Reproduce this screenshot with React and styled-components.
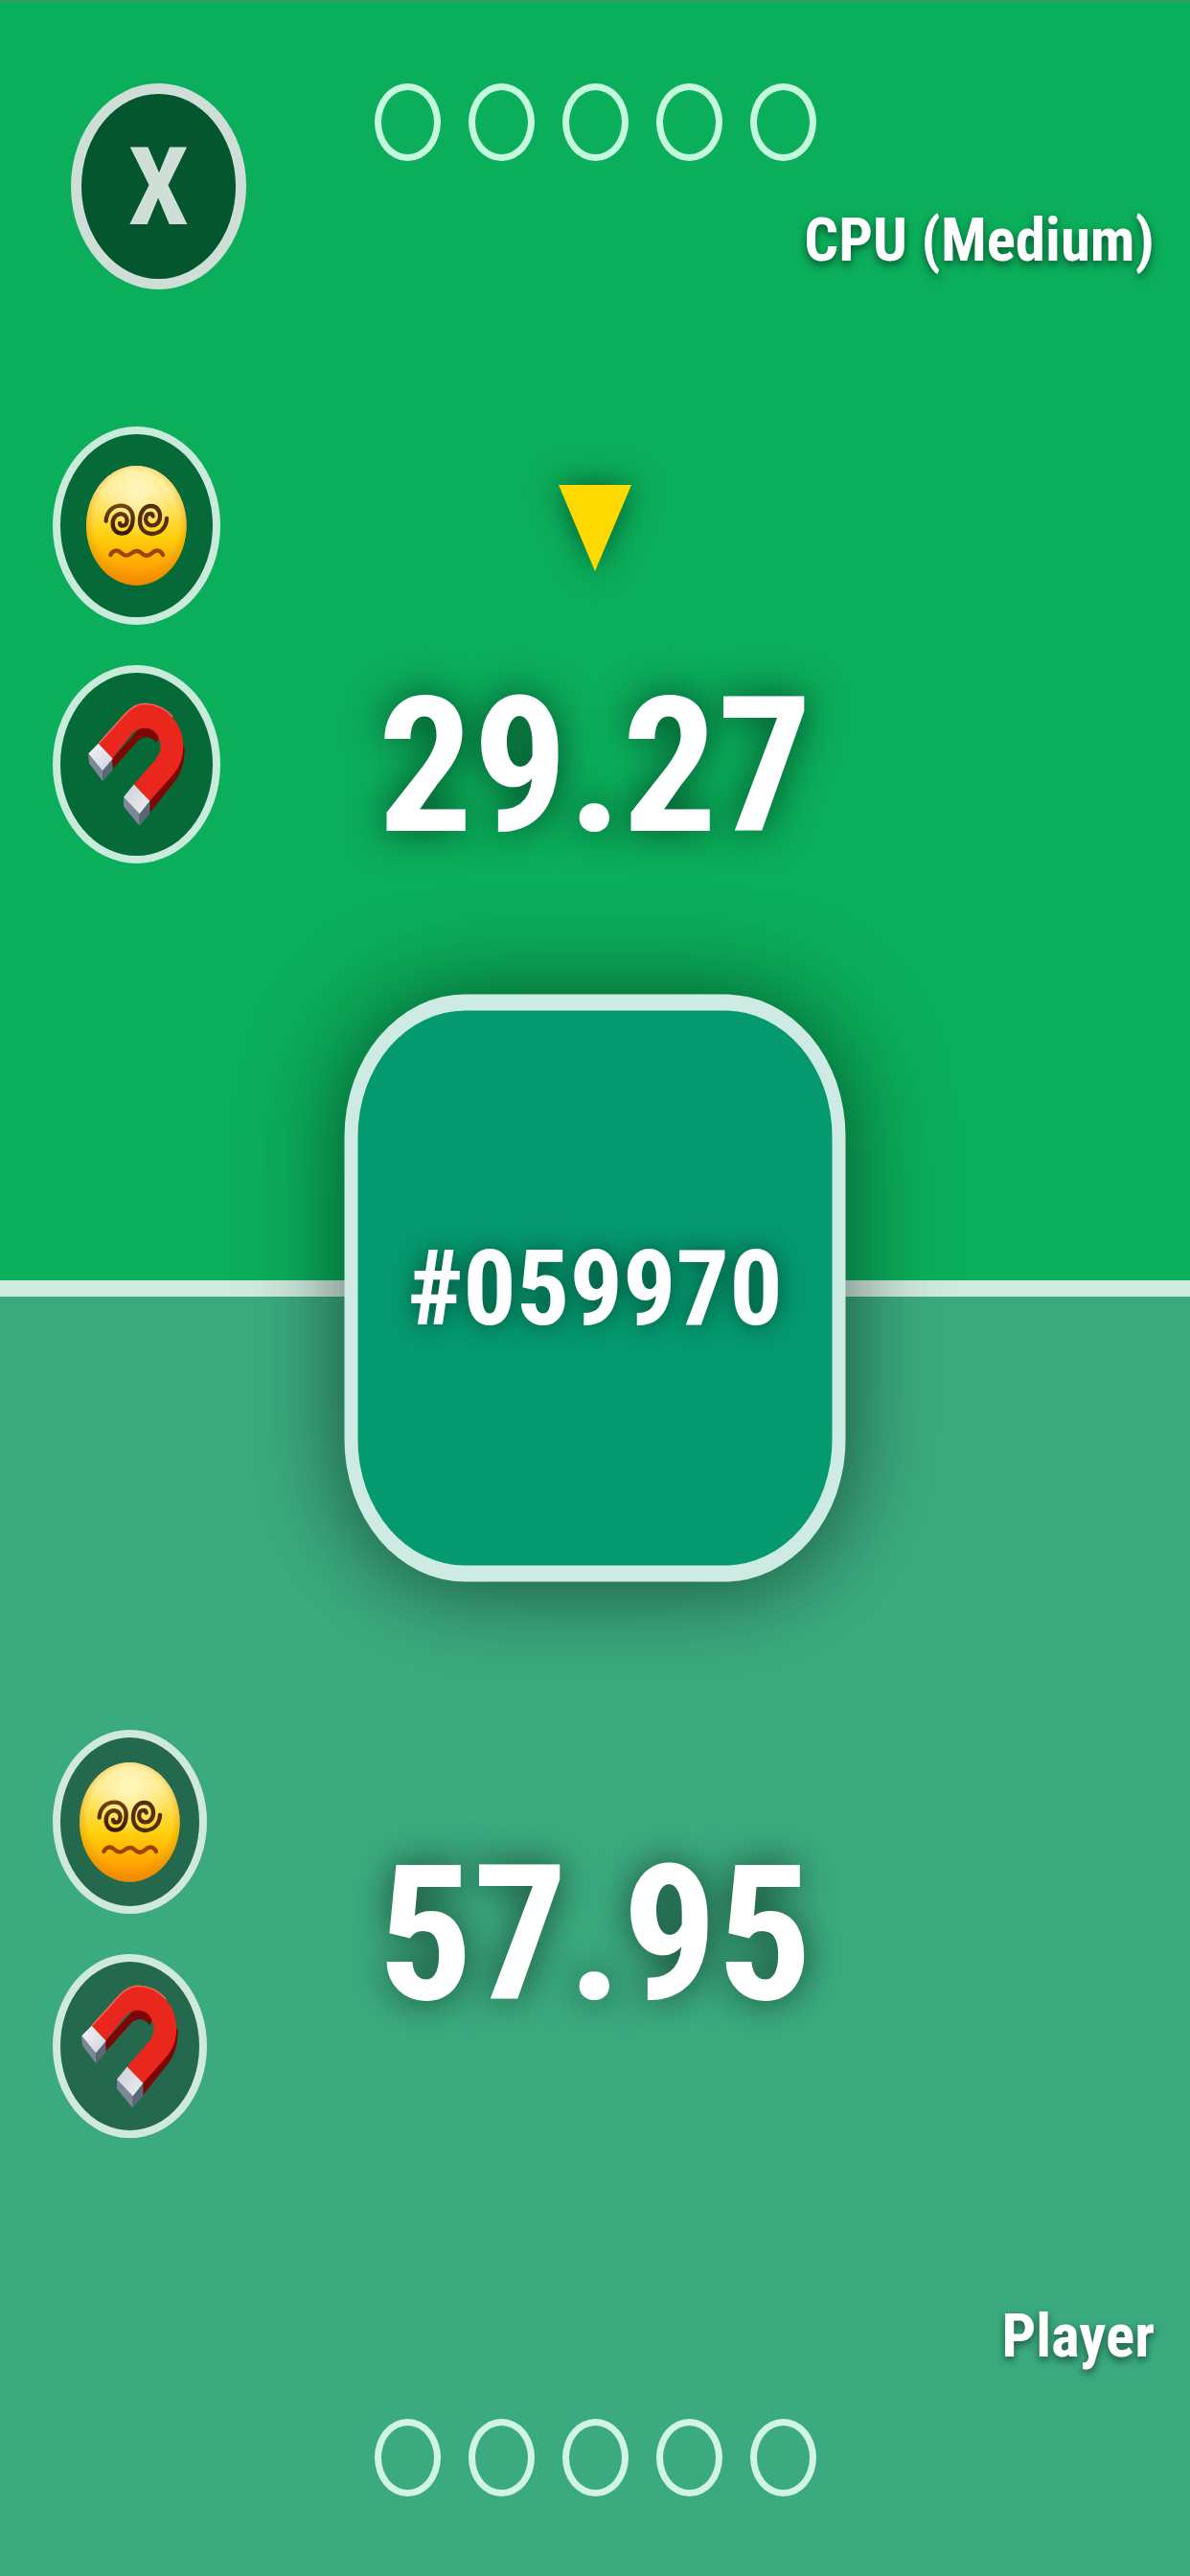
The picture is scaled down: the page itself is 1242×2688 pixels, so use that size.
import React, { useId } from 'react';
import styled, { createGlobalStyle } from 'styled-components';

const GlobalStyle = createGlobalStyle`
    *, *::before, *::after {
        box-sizing: border-box;
    }
    body {
        margin: 0;
        font-family: "Roboto Condensed", Roboto, "Liberation Sans", sans-serif;
        color: white;
    }
`

const Themes = {
    cpu: {
        background: "#0bae5b",
        power: "#056a37",
        powerBorder: "#c9ebdb",
        dot: "#c5f9dd"
    },
    player: {
        background: "#3bab7f",
        power: "#24694d",
        powerBorder: "#d0e9df",
        dot: "#d0f4e6"
    }
}

const Board = styled.main`
    position: relative;
    display: grid;
    grid-template-rows: 1fr auto 1fr;
    min-height: 100vh;
`

const Half = styled.section`
    display: flex;
    flex-direction: column;
    background-color: ${props => Themes[props.$side].background};
`

const CpuHalf = styled(Half)`
    gap: 143px;
    padding-top: 85px;
    border-top: 2px solid #3a9965;
`

const PlayerHalf = styled(Half)`
    justify-content: flex-end;
    padding-bottom: 83px;
`

const Divider = styled.div`
    height: 17px;
    background-color: #cfeade;
`

const Row = styled.div`
    display: grid;
    grid-template-columns: minmax(0, 1fr) auto minmax(0, 1fr);
    align-items: start;
`

const CloseButton = styled.button`
    width: 183px;
    height: 215px;
    margin-left: 74px;
    padding: 0;
    border: 11px solid #cfdfd8;
    border-radius: 50%;
    background-color: #03562d;
    color: #cfdfd8;
    font: inherit;
    font-size: 114px;
    font-weight: 700;
    line-height: 1;
    cursor: pointer;
`

const Dots = styled.ul`
    display: flex;
    justify-content: center;
    gap: 29px;
    margin: 0;
    padding: 0;
    list-style-type: none;
`

const Dot = styled.li`
    width: 69px;
    height: 81px;
    border: 7px solid ${props => Themes[props.$side].dot};
    border-radius: 50%;
`

const Name = styled.h2`
    justify-self: end;
    margin: 0;
    padding-right: 37px;
    font-size: 63px;
    font-weight: 700;
    line-height: 64px;
    text-align: right;
    white-space: nowrap;
    text-shadow: 0 4px 8px rgba(0, 0, 0, .5);
`

const CpuName = styled(Name)`
    padding-top: 132px;
`

const Powers = styled.div`
    display: flex;
    flex-direction: column;
    gap: 42px;
    margin-left: 55px;
`

const PowerButton = styled.button`
    display: flex;
    justify-content: center;
    align-items: center;
    width: ${props => props.$side === "cpu" ? "175px" : "161px"};
    height: ${props => props.$side === "cpu" ? "207px" : "192px"};
    padding: 0;
    border: 8px solid ${props => Themes[props.$side].powerBorder};
    border-radius: 50%;
    background-color: ${props => Themes[props.$side].power};
    cursor: pointer;
`

const ScoreBox = styled.div`
    display: flex;
    flex-direction: column;
    align-items: center;
    gap: 112px;
    padding-top: 61px;
`

const PlayerScoreBox = styled(ScoreBox)`
    padding-top: 122px;
`

const Arrow = styled.svg`
    display: block;
    width: 76px;
    height: 90px;
    overflow: visible;
    filter: drop-shadow(0 0 16px rgba(0, 0, 0, .5));
`

const Score = styled.p`
    margin: 0;
    font-size: 196px;
    font-weight: 700;
    line-height: 184px;
    text-shadow: 0 0 40px rgba(0, 0, 0, .6);
`

const Footer = styled.footer`
    display: flex;
    flex-direction: column;
    gap: 54px;
    padding-top: 175px;
`

const Target = styled.div`
    position: absolute;
    top: 50%;
    left: 50%;
    transform: translate(-50%, -50%);
    display: flex;
    justify-content: center;
    align-items: center;
    width: 523px;
    height: 613px;
    border: solid #cdebe2;
    border-width: 17px 14px;
    border-radius: 126px / 148px;
    background-color: #059970;
    box-shadow: 0 4px 100px rgba(0, 0, 0, .55);
    font-size: 110px;
    font-weight: 700;
    line-height: 1;
    text-shadow: 0 0 24px rgba(0, 0, 0, .5);
`

function DizzyFace() {
    const id = useId();
    const eye = "M62 173C63 145 82 126 107 125C133 124 147 144 146 168C145 194 132 212 111 212C93 212 82 197 83 178C84 160 97 149 111 151C125 153 131 168 126 180C122 190 107 191 105 180";

    return (
        <svg width="105" height="125" viewBox="0 0 315 375" aria-hidden="true">
            <defs>
                <linearGradient id={id + "skin"} x1="0" y1="0" x2="0" y2="1">
                    <stop offset="0" stopColor="#ffe580" />
                    <stop offset=".2" stopColor="#ffeb8c" />
                    <stop offset=".6" stopColor="#ffcf0a" />
                    <stop offset="1" stopColor="#ff8a00" />
                </linearGradient>
                <radialGradient id={id + "shine"} cx=".5" cy=".2" r=".4">
                    <stop offset="0" stopColor="#fff6bd" />
                    <stop offset="1" stopColor="#fff6bd" stopOpacity="0" />
                </radialGradient>
                <radialGradient id={id + "edge"} cx=".5" cy=".46" r=".56">
                    <stop offset=".75" stopColor="#e08a00" stopOpacity="0" />
                    <stop offset="1" stopColor="#e08a00" stopOpacity=".65" />
                </radialGradient>
                <linearGradient id={id + "eye"} gradientUnits="userSpaceOnUse" x1="0" y1="120" x2="0" y2="218">
                    <stop offset="0" stopColor="#75450f" />
                    <stop offset="1" stopColor="#341700" />
                </linearGradient>
            </defs>
            <ellipse cx="157" cy="187" rx="157" ry="187" fill={`url(#${id}skin)`} />
            <ellipse cx="157" cy="187" rx="157" ry="187" fill={`url(#${id}shine)`} />
            <ellipse cx="157" cy="187" rx="157" ry="187" fill={`url(#${id}edge)`} />
            <g fill="none" strokeWidth="13" strokeLinecap="round" strokeLinejoin="round">
                <path d={eye} stroke={`url(#${id}eye)`} />
                <path d={eye} stroke="#552d08" transform="rotate(180 157 169)" />
                <path d="M76 279C84 262 98 262 111 274C122 284 130 283 140 275C151 266 163 263 175 275C185 285 194 284 205 274C218 262 232 262 240 279" stroke="#9f4100" />
            </g>
        </svg>
    )
}

function Magnet() {
    const id = useId();

    return (
        <svg width="101" height="129" viewBox="0 0 303 386" aria-hidden="true">
            <defs>
                <linearGradient id={id} x1="0" y1="0" x2="1" y2="1">
                    <stop offset="0" stopColor="#f3f4f7" />
                    <stop offset=".5" stopColor="#c6cad1" />
                    <stop offset="1" stopColor="#eceef2" />
                </linearGradient>
            </defs>
            <path d="M75 176L77 208L152 124Q184 90 214 126L236 76L180 60ZM193 308L193 345L268 251Q303 210 302 140L280 120Z" fill="#7c0705" />
            <path d="M33 128L117 34C140 8 160 1 184 3C219 6 251 26 275 60C294 87 301 123 296 160C292 185 283 205 268 223L193 308L143 256L211 178C225 161 231 139 223 117C215 91 198 80 178 80C161 80 148 87 136 100L75 176Z" fill="#e9271d" />
            <path d="M34 127L119 33C143 8 164 2 184 4C215 6 243 20 264 44" fill="none" stroke="#f7605a" strokeWidth="5" />
            <path d="M0 158L45 213L46 246L3 190ZM111 296L161 348L161 386L111 325Z" fill="#7d8795" />
            <path d="M75 176L77 210L46 246L45 213ZM193 308L193 347L161 386L161 348Z" fill="#5c6675" />
            <path d="M32 128L77 176L45 213L1 159ZM143 256L193 308L161 348L111 296Z" fill={`url(#${id})`} />
        </svg>
    )
}

function WinDots(props) {
    return (
        <Dots aria-label="Rounds won">
            {[1, 2, 3, 4, 5].map(round => (
                <Dot key={round} $side={props.side} />
            ))}
        </Dots>
    )
}

function PowerUps(props) {
    return (
        <Powers>
            <PowerButton $side={props.side} aria-label="Dizzy">
                <DizzyFace />
            </PowerButton>
            <PowerButton $side={props.side} aria-label="Magnet">
                <Magnet />
            </PowerButton>
        </Powers>
    )
}

function App() {
    return (
        <>
            <GlobalStyle />
            <Board>
                <CpuHalf $side="cpu">
                    <Row>
                        <CloseButton>X</CloseButton>
                        <WinDots side="cpu" />
                        <CpuName>CPU (Medium)</CpuName>
                    </Row>
                    <Row>
                        <PowerUps side="cpu" />
                        <ScoreBox>
                            <Arrow viewBox="0 0 76 90" aria-hidden="true">
                                <path d="M0 0H76L38 90Z" fill="#ffd900" />
                            </Arrow>
                            <Score>29.27</Score>
                        </ScoreBox>
                    </Row>
                </CpuHalf>
                <Divider />
                <PlayerHalf $side="player">
                    <Row>
                        <PowerUps side="player" />
                        <PlayerScoreBox>
                            <Score>57.95</Score>
                        </PlayerScoreBox>
                    </Row>
                    <Footer>
                        <Name>Player</Name>
                        <WinDots side="player" />
                    </Footer>
                </PlayerHalf>
                <Target>#059970</Target>
            </Board>
        </>
    )
}

export default App;
